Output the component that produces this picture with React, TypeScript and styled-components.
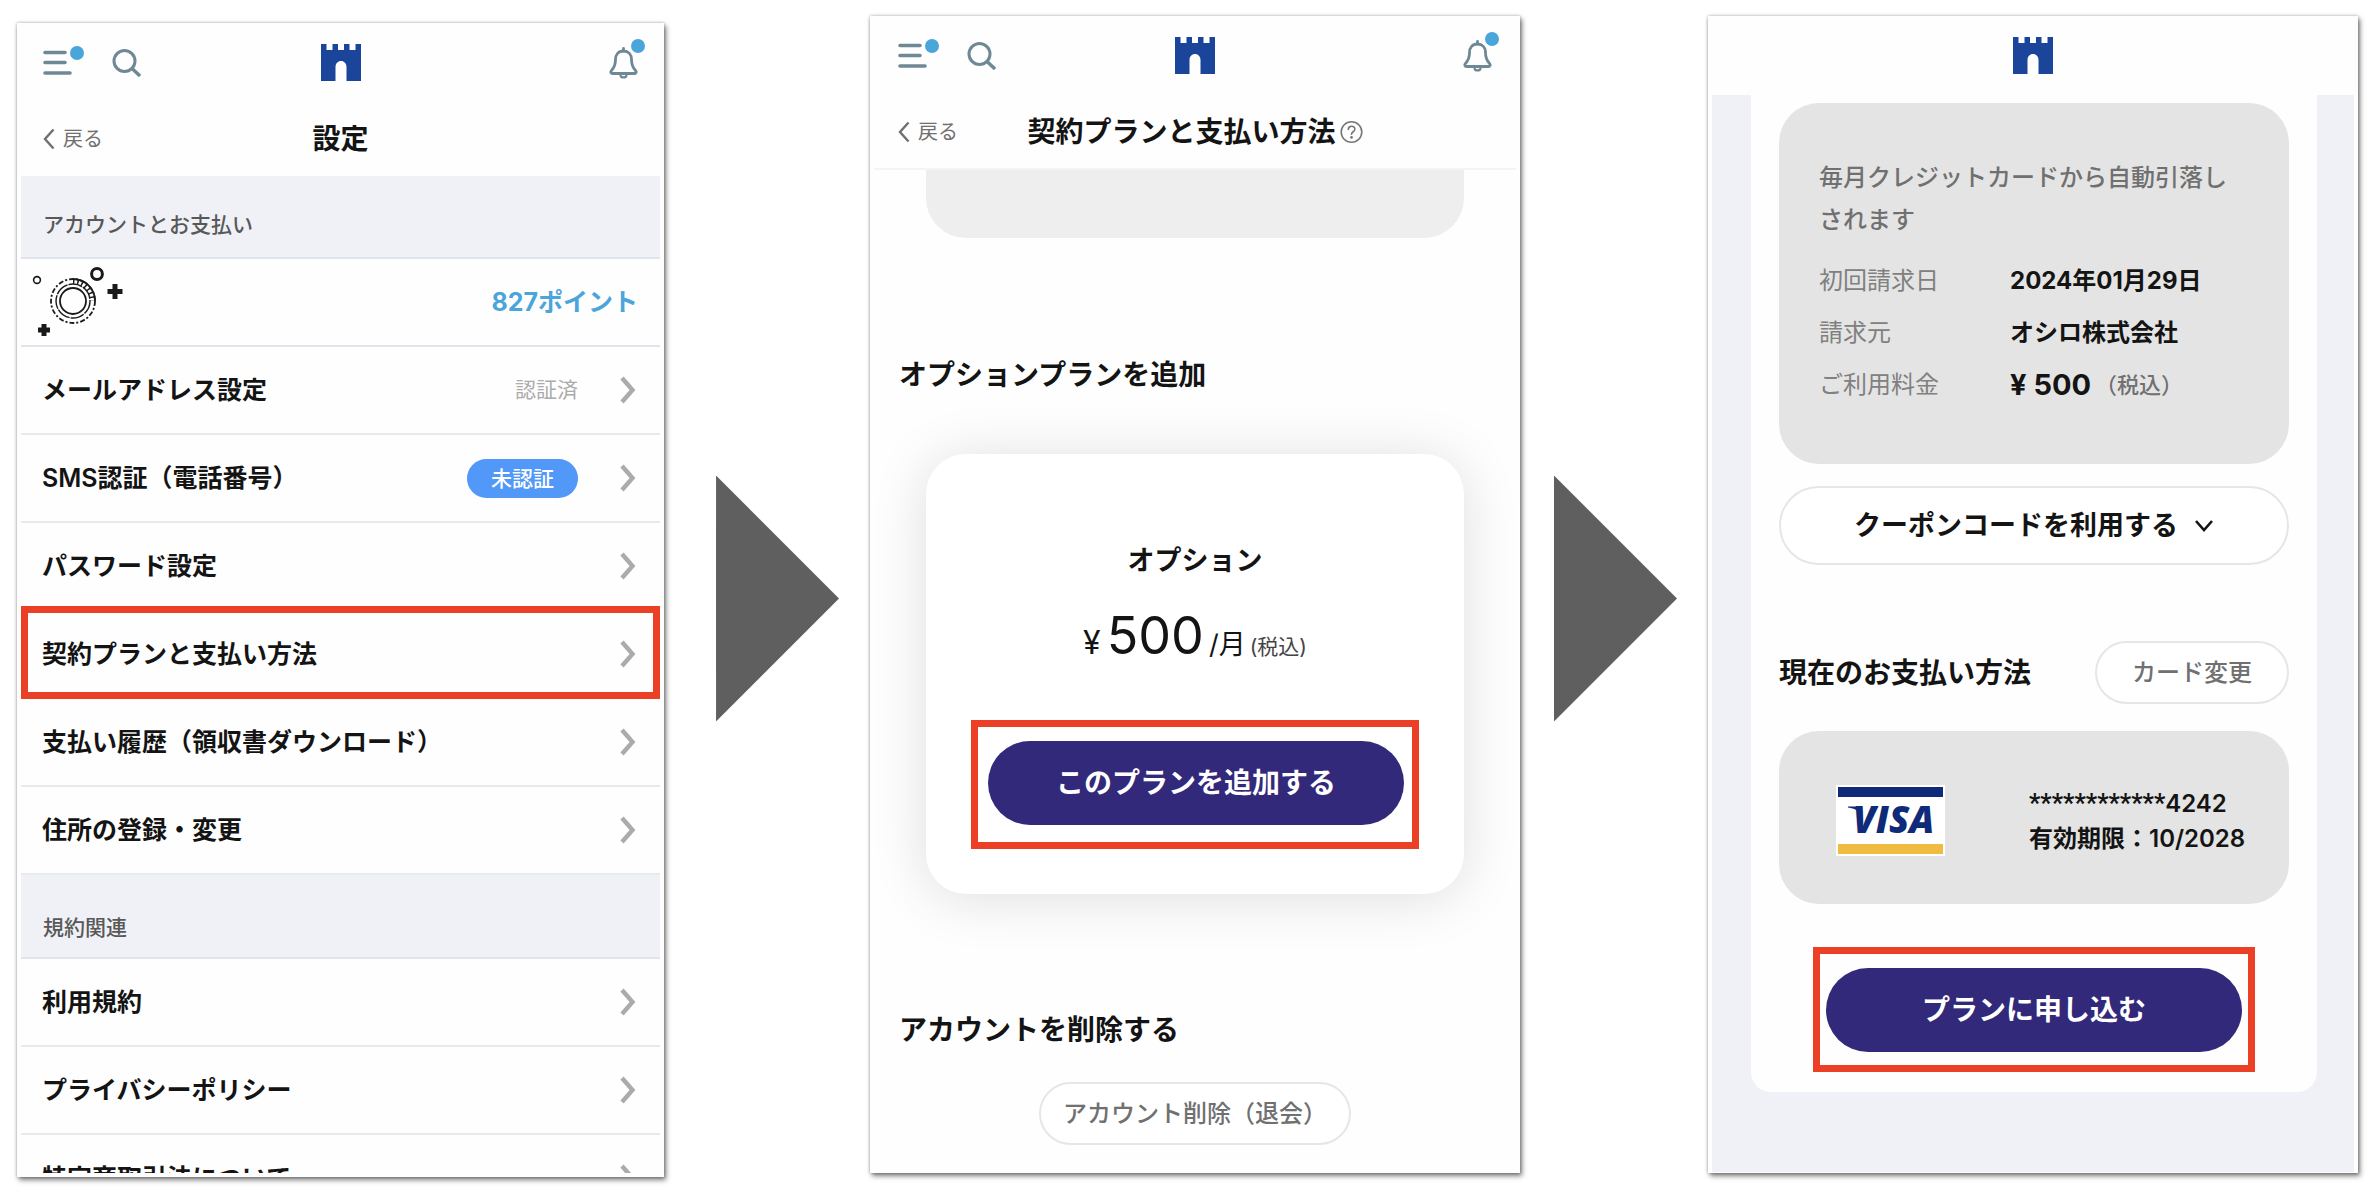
import React from 'react';
import styled, { createGlobalStyle, css } from 'styled-components';

const color = {
  ink: '#141414',
  muted: '#707070',
  faint: '#ababab',
  icon: '#6f8896',
  sky: '#4aa5da',
  badge: '#5198f8',
  brand: '#1b459b',
  primary: '#32297a',
  mark: '#ec4026',
  wash: '#eff1f6',
  line: '#dfe5ea',
  outline: '#e6e6e6',
  tile: '#e4e4e4',
};

const GlobalStyle = createGlobalStyle`
  *, *::before, *::after { box-sizing: border-box; }
  body {
    margin: 0;
    background: #fff;
    color: ${color.ink};
    font-family: Inter, "Noto Sans CJK JP", sans-serif;
  }
  h1, h2, h3, p, ul, dl, dd { margin: 0; padding: 0; }
  button { font-family: inherit; cursor: pointer; }
  a { color: inherit; text-decoration: none; }
`;

/* ---------- page ---------- */

const Flow = styled.main`
  display: flex;
  height: 100vh;
  padding: 16px 18px 25px 17px;
`;

const Screen = styled.section<{ $grow: number; $low?: boolean }>`
  flex: ${(p) => p.$grow} 1 0;
  min-width: 0;
  display: flex;
  flex-direction: column;
  padding: 0 4px ${(p) => (p.$low ? 4 : 1)}px;
  margin: ${(p) => (p.$low ? '7px 0 -4px' : '0')};
  background: #fefefe;
  box-shadow: 0 0 3px rgba(0, 0, 0, 0.3), 2px 3px 5px rgba(0, 0, 0, 0.5);
`;

const Arrow = styled.div<{ $before: number }>`
  flex: none;
  align-self: center;
  width: 123px;
  height: 246px;
  margin: 8px 31px 0 ${(p) => p.$before}px;
  background: #5f5f5f;
  clip-path: polygon(0 0, 100% 50%, 0 100%);
`;

/* ---------- header ---------- */

const TopBar = styled.header<{ $inset: number }>`
  flex: none;
  display: grid;
  grid-template-columns: 1fr auto 1fr;
  align-items: center;
  height: 79px;
  padding: 0 ${(p) => p.$inset}px;
`;

const Tools = styled.div<{ $end?: boolean }>`
  display: flex;
  gap: 40px;
  justify-content: ${(p) => (p.$end ? 'flex-end' : 'flex-start')};
`;

const IconButton = styled.button<{ $dot?: 'menu' | 'bell' }>`
  position: relative;
  display: flex;
  padding: 0;
  border: 0;
  background: none;
  color: ${color.icon};
  ${(p) =>
    p.$dot &&
    css`
      &::after {
        content: '';
        position: absolute;
        top: ${p.$dot === 'menu' ? -3 : -8}px;
        right: ${p.$dot === 'menu' ? -12 : -7}px;
        width: 14px;
        height: 14px;
        border-radius: 50%;
        background: ${color.sky};
      }
    `}
`;

const TitleBar = styled.div<{ $inset: number; $ruled?: boolean }>`
  flex: none;
  display: grid;
  grid-template-columns: 1fr auto 1fr;
  align-items: center;
  height: ${(p) => (p.$ruled ? 75 : 74)}px;
  padding: 0 ${(p) => p.$inset}px;
  border-bottom: ${(p) => (p.$ruled ? '2px solid #f4f4f4' : '0')};
`;

const Back = styled.a`
  display: flex;
  align-items: center;
  gap: 8px;
  color: ${color.muted};
  font-size: 20px;
  line-height: 32px;
`;

const Title = styled.h1`
  display: flex;
  align-items: center;
  gap: 4px;
  font-size: 28px;
  font-weight: 700;
  line-height: 40px;
`;

/* ---------- settings list ---------- */

const Scroll = styled.div`
  flex: 1 1 0;
  min-height: 0;
  overflow: hidden;
`;

const GroupLabel = styled.h2<{ $next?: boolean }>`
  display: flex;
  align-items: flex-end;
  height: ${(p) => (p.$next ? 84 : 83)}px;
  padding: 0 22px ${(p) => (p.$next ? 14 : 17)}px;
  border-bottom: 2px solid ${color.line};
  background: ${color.wash};
  color: #585858;
  font-size: 21px;
  font-weight: 500;
  line-height: 30px;
`;

const List = styled.ul`
  list-style: none;
`;

const Row = styled.a<{ $marked?: boolean }>`
  position: relative;
  display: flex;
  align-items: center;
  gap: 42px;
  height: 88px;
  padding: 0 24px 0 21px;
  border-bottom: 2px solid #e7ebee;
  ${(p) =>
    p.$marked &&
    css`
      &::after {
        content: '';
        position: absolute;
        inset: -5px 0 -2px;
        border: 7px solid ${color.mark};
      }
    `}
`;

const RowName = styled.span`
  flex: 1;
  font-size: 25px;
  font-weight: 600;
  line-height: 36px;
`;

const Verified = styled.span`
  color: ${color.faint};
  font-size: 21px;
  line-height: 30px;
`;

const Unverified = styled.span`
  padding: 4px 24px;
  border-radius: 20px;
  background: ${color.badge};
  color: #fff;
  font-size: 21px;
  font-weight: 500;
  line-height: 31px;
`;

const PointRow = styled.div`
  display: flex;
  align-items: center;
  justify-content: space-between;
  height: 88px;
  padding: 0 22px 0 11px;
  border-bottom: 2px solid ${color.line};
`;

const Points = styled.span`
  color: ${color.sky};
  font-size: 25px;
  font-weight: 700;
  line-height: 36px;
`;

/* ---------- shared parts ---------- */

const Heading = styled.h2`
  font-size: 28px;
  font-weight: 700;
  line-height: 40px;
`;

const Marker = styled.div<{ $pad: string }>`
  align-self: center;
  padding: ${(p) => p.$pad};
  border: 7px solid ${color.mark};
`;

const PrimaryButton = styled.button`
  display: block;
  width: 416px;
  height: 84px;
  padding: 0;
  border: 0;
  border-radius: 42px;
  background: ${color.primary};
  color: #fff;
  font-size: 28px;
  font-weight: 600;
  line-height: 40px;
`;

const GhostButton = styled.button<{ $pad: number }>`
  height: 63px;
  padding: 0 ${(p) => p.$pad}px;
  border: 2px solid ${color.outline};
  border-radius: 32px;
  background: #fff;
  color: ${color.muted};
  font-size: 24px;
  font-weight: 500;
  line-height: 36px;
`;

/* ---------- plan screen ---------- */

const PlanBody = styled.div`
  flex: 1 1 0;
  min-height: 0;
  display: flex;
  flex-direction: column;
  padding: 0 25px;
  overflow: hidden;
`;

const PlanStub = styled.div`
  flex: none;
  height: 68px;
  margin: 0 27px 117px;
  border-radius: 0 0 40px 40px;
  background: #eee;
`;

const PlanCard = styled.article`
  display: flex;
  flex-direction: column;
  align-items: center;
  margin: 59px 27px 116px;
  padding: 87px 0 45px;
  border-radius: 40px;
  background: #fff;
  box-shadow: 0 4px 56px rgba(0, 0, 0, 0.13);
`;

const PlanName = styled.h3`
  font-size: 27px;
  font-weight: 600;
  line-height: 40px;
`;

const Price = styled.p`
  display: flex;
  align-items: baseline;
  height: 70px;
  margin: 20px 0 49px;
  line-height: 70px;
`;

const Yen = styled.span`
  margin-right: 6px;
  font-size: 32px;
`;

const Amount = styled.span`
  margin-right: 5px;
  font-size: 52px;
`;

const Per = styled.span`
  margin-right: 4px;
  font-size: 27px;
`;

const Tax = styled.span`
  color: #444;
  font-size: 21px;
`;

const Centered = styled.div`
  display: flex;
  justify-content: center;
  margin-top: 32px;
`;

/* ---------- checkout screen ---------- */

const CheckoutBody = styled.div`
  flex: 1 1 0;
  min-height: 0;
  padding: 0 37px 0 39px;
  overflow: hidden;
  background: ${color.wash};
`;

const Sheet = styled.div`
  display: flex;
  flex-direction: column;
  padding: 8px 28px 20px;
  border-radius: 0 0 20px 20px;
  background: #fefefe;
`;

const Summary = styled.div`
  padding: 54px 40px 53px;
  border-radius: 40px;
  background: ${color.tile};
`;

const Note = styled.p`
  margin-bottom: 14px;
  color: ${color.muted};
  font-size: 24px;
  font-weight: 500;
  line-height: 42px;
`;

const Facts = styled.dl`
  display: grid;
  grid-template-columns: 191px 1fr;
  grid-auto-rows: 52px;
  align-items: center;
  font-size: 24px;
  line-height: 36px;
`;

const FactName = styled.dt`
  color: #808080;
`;

const FactValue = styled.dd<{ $big?: boolean }>`
  display: flex;
  align-items: center;
  font-size: ${(p) => (p.$big ? 29 : 24)}px;
  font-weight: 700;
`;

const FactTax = styled.small`
  margin-left: 4px;
  color: ${color.muted};
  font-size: 22px;
  font-weight: 500;
`;

const CouponButton = styled.button`
  display: flex;
  align-items: center;
  justify-content: center;
  gap: 16px;
  height: 79px;
  margin: 22px 0 76px;
  padding: 0;
  border: 2px solid ${color.outline};
  border-radius: 40px;
  background: #fff;
  color: ${color.ink};
  font-size: 27px;
  font-weight: 700;
  line-height: 40px;
`;

const MethodHead = styled.div`
  display: flex;
  align-items: center;
  justify-content: space-between;
`;

const CardTile = styled.div`
  display: flex;
  align-items: center;
  gap: 84px;
  height: 173px;
  margin: 27px 0 43px;
  padding: 6px 0 0 57px;
  border-radius: 40px;
  background: ${color.tile};
`;

const CardText = styled.p`
  font-size: 24px;
  font-weight: 600;
  line-height: 35px;
`;

const Masked = styled.span`
  font-family: Roboto, sans-serif;
  font-size: 25px;
  font-weight: 700;
`;

/* ---------- drawings ---------- */

const MenuIcon = () => (
  <svg width="29" height="28" viewBox="0 0 29 28" fill="none" stroke="currentColor" strokeWidth="3.6" strokeLinecap="round">
    <path d="M2 3.500h20M2 13.500h20M2 24h25" />
  </svg>
);

const SearchIcon = () => (
  <svg width="29" height="28" viewBox="0 0 29 28" fill="none" stroke="currentColor" strokeWidth="3">
    <circle cx="12.5" cy="12" r="10.5" />
    <path d="M20 19.5l8 7.5" strokeWidth="3.4" />
  </svg>
);

const BellIcon = () => (
  <svg width="29" height="32" viewBox="0 0 29 32" fill="none" stroke="currentColor" strokeWidth="2.8" strokeLinejoin="round" strokeLinecap="round">
    <path d="M14.500 1.500v2.500" />
    <path d="M14.500 4c-5 0-8 3.600-8 8.600 0 6-1.500 8.400-4 10.900-1.300 1.400-.6 3 1 3h22c1.600 0 2.300-1.600 1-3-2.500-2.500-4-4.900-4-10.900 0-5-3-8.600-8-8.600z" />
    <path d="M11.500 28.500c.5 2.600 5.500 2.600 6 0" strokeWidth="2.200" />
  </svg>
);

const CastleLogo = () => (
  <svg width="40" height="37" viewBox="0 0 40 37" role="img" aria-label="ホーム">
    <path
      fill={color.brand}
      d="M0 0h5.500v6H11.500V0h5.500v6h6V0h5.500v6h6V0H40v37H25.500V23c0-3.600-2.400-6-5.500-6s-5.500 2.400-5.500 6v14H0z"
    />
  </svg>
);

const BackIcon = () => (
  <svg width="12" height="22" viewBox="0 0 12 22" fill="none" stroke="currentColor" strokeWidth="2.400">
    <path d="M10.500 1.500L2 11l8.500 9.500" />
  </svg>
);

const NextIcon = () => (
  <svg width="16" height="28" viewBox="0 0 16 28" fill="none" stroke={color.faint} strokeWidth="4.400">
    <path d="M2 2l10.500 12L2 26" />
  </svg>
);

const DownIcon = () => (
  <svg width="20" height="14" viewBox="0 0 20 14" fill="none" stroke="currentColor" strokeWidth="2.600">
    <path d="M2 2l8 9 8-9" />
  </svg>
);

const HelpIcon = () => (
  <svg width="23" height="24" viewBox="0 0 23 24" fill="none" stroke="#777" strokeWidth="1.600" strokeLinecap="round">
    <circle cx="11.500" cy="12" r="10.300" />
    <path d="M8.300 9.500c0-4.400 6.600-4.300 6.600-.3 0 2.500-3.400 2.600-3.400 5.100" />
    <circle cx="11.500" cy="17.400" r="0.600" fill="#777" />
  </svg>
);

const CoinIcon = () => (
  <svg width="94" height="72" viewBox="0 0 94 72" fill="none" stroke="#1a1a1a">
    <circle cx="5" cy="14" r="3.400" strokeWidth="1.600" />
    <circle cx="65" cy="8" r="5.400" strokeWidth="3" />
    <circle cx="41" cy="35" r="22" strokeWidth="1.800" strokeDasharray="5 2 2 2" />
    <circle cx="41" cy="35" r="17" strokeWidth="1.400" strokeDasharray="14 1" />
    <circle cx="41" cy="35" r="13" strokeWidth="1.800" />
    <path d="M41 13a22 22 0 0 1 22 22" strokeWidth="1.800" />
    <path d="M41 15.500a19.500 19.500 0 0 1 19.500 19.500" strokeWidth="5" strokeDasharray="1.500 2.800" />
    <path d="M83 18v15M75.500 25.500h15M12 58v12M6 64h12" strokeWidth="5" />
  </svg>
);

const VisaLogo = () => (
  <svg width="109" height="71" viewBox="0 0 109 71" role="img" aria-label="VISA">
    <rect width="109" height="71" fill="#fff" />
    <rect x="2" y="2" width="105" height="10" fill="#0e2a78" />
    <rect x="2" y="59" width="105" height="10" fill="#efbb40" />
    <path d="M12 21.500h11.500l3 9C23 26 19 23.500 12 22.500z" fill="#0e2a78" />
    <text x="17" y="48" fill="#0e2a78" fontFamily="'Open Sans', sans-serif" fontSize="37" fontWeight="800" fontStyle="italic">
      VISA
    </text>
  </svg>
);

/* ---------- screens ---------- */

const Header = ({ inset, bare }: { inset: number; bare?: boolean }) => (
  <TopBar $inset={inset}>
    <Tools>
      {!bare && (
        <>
          <IconButton $dot="menu" aria-label="メニュー">
            <MenuIcon />
          </IconButton>
          <IconButton aria-label="検索">
            <SearchIcon />
          </IconButton>
        </>
      )}
    </Tools>
    <CastleLogo />
    <Tools $end>
      {!bare && (
        <IconButton $dot="bell" aria-label="お知らせ">
          <BellIcon />
        </IconButton>
      )}
    </Tools>
  </TopBar>
);

type Item = { name: string; state?: 'done' | 'todo'; marked?: boolean };

const accountItems: Item[] = [
  { name: 'メールアドレス設定', state: 'done' },
  { name: 'SMS認証（電話番号）', state: 'todo' },
  { name: 'パスワード設定' },
  { name: '契約プランと支払い方法', marked: true },
  { name: '支払い履歴（領収書ダウンロード）' },
  { name: '住所の登録・変更' },
];

const termItems: Item[] = [
  { name: '利用規約' },
  { name: 'プライバシーポリシー' },
  { name: '特定商取引法について' },
];

const Items = ({ items }: { items: Item[] }) => (
  <List>
    {items.map((item) => (
      <li key={item.name}>
        <Row href="#" $marked={item.marked}>
          <RowName>{item.name}</RowName>
          {item.state === 'done' && <Verified>認証済</Verified>}
          {item.state === 'todo' && <Unverified>未認証</Unverified>}
          <NextIcon />
        </Row>
      </li>
    ))}
  </List>
);

const SettingsScreen = () => (
  <Screen $grow={647} $low>
    <Header inset={22} />
    <TitleBar $inset={22}>
      <Back href="#">
        <BackIcon />
        戻る
      </Back>
      <Title>設定</Title>
    </TitleBar>
    <Scroll>
      <GroupLabel>アカウントとお支払い</GroupLabel>
      <PointRow>
        <CoinIcon />
        <Points>827ポイント</Points>
      </PointRow>
      <Items items={accountItems} />
      <GroupLabel $next>規約関連</GroupLabel>
      <Items items={termItems} />
    </Scroll>
  </Screen>
);

const PlanScreen = () => (
  <Screen $grow={650}>
    <Header inset={24} />
    <TitleBar $inset={24} $ruled>
      <Back href="#">
        <BackIcon />
        戻る
      </Back>
      <Title>
        契約プランと支払い方法
        <HelpIcon />
      </Title>
    </TitleBar>
    <PlanBody>
      <PlanStub />
      <Heading>オプションプランを追加</Heading>
      <PlanCard>
        <PlanName>オプション</PlanName>
        <Price>
          <Yen>¥</Yen>
          <Amount>500</Amount>
          <Per>/月</Per>
          <Tax>(税込)</Tax>
        </Price>
        <Marker $pad="14px 8px 17px 10px">
          <PrimaryButton>このプランを追加する</PrimaryButton>
        </Marker>
      </PlanCard>
      <Heading>アカウントを削除する</Heading>
      <Centered>
        <GhostButton $pad={22}>アカウント削除（退会）</GhostButton>
      </Centered>
    </PlanBody>
  </Screen>
);

const CheckoutScreen = () => (
  <Screen $grow={650}>
    <Header inset={24} bare />
    <CheckoutBody>
      <Sheet>
        <Summary>
          <Note>毎月クレジットカードから自動引落しされます</Note>
          <Facts>
            <FactName>初回請求日</FactName>
            <FactValue>2024年01月29日</FactValue>
            <FactName>請求元</FactName>
            <FactValue>オシロ株式会社</FactValue>
            <FactName>ご利用料金</FactName>
            <FactValue $big>
              ¥ 500<FactTax>（税込）</FactTax>
            </FactValue>
          </Facts>
        </Summary>
        <CouponButton>
          クーポンコードを利用する
          <DownIcon />
        </CouponButton>
        <MethodHead>
          <Heading>現在のお支払い方法</Heading>
          <GhostButton $pad={35}>カード変更</GhostButton>
        </MethodHead>
        <CardTile>
          <VisaLogo />
          <CardText>
            <Masked>************</Masked>4242
            <br />
            有効期限：10/2028
          </CardText>
        </CardTile>
        <Marker $pad="14px 6px 13px">
          <PrimaryButton>プランに申し込む</PrimaryButton>
        </Marker>
      </Sheet>
    </CheckoutBody>
  </Screen>
);

export default function App() {
  return (
    <>
      <GlobalStyle />
      <Flow>
        <SettingsScreen />
        <Arrow $before={52} />
        <PlanScreen />
        <Arrow $before={34} />
        <CheckoutScreen />
      </Flow>
    </>
  );
}
